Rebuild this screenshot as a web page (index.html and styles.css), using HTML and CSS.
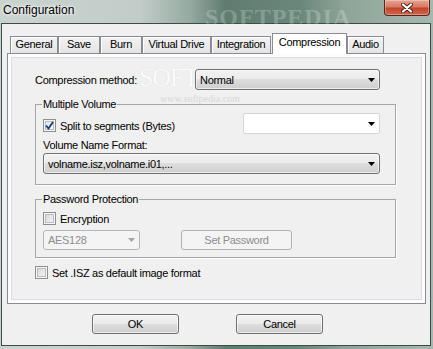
FILE: index.html
```html
<!DOCTYPE html>
<html lang="en">
<head>
    <meta charset="UTF-8">
    <title>Configuration</title>
    <link rel="stylesheet" href="styles.css">
</head>
<body>
    <div class="window">
        <div class="titlebar">
            <span class="title">Configuration</span>
            <span class="glass-mark">SOFTPEDIA</span>
            <div class="close">
                <svg width="12" height="10" viewBox="0 0 12 10">
                    <path d="M2 1.5 L10 8.5 M10 1.5 L2 8.5" stroke="#4a1e15" stroke-width="4" stroke-linecap="round"/>
                    <path d="M2 1.5 L10 8.5 M10 1.5 L2 8.5" stroke="#fff" stroke-width="2.2" stroke-linecap="round"/>
                </svg>
            </div>
        </div>

        <div class="client">
            <div class="tabs">
                <div class="tab tab-general">General</div>
                <div class="tab tab-save">Save</div>
                <div class="tab tab-burn">Burn</div>
                <div class="tab tab-virtual">Virtual Drive</div>
                <div class="tab tab-integration">Integration</div>
                <div class="tab tab-compression active">Compression</div>
                <div class="tab tab-audio">Audio</div>
            </div>

            <div class="panel">
                <!-- watermark over the page -->
                <div class="watermark">SOFTPEDIA<sup>™</sup></div>
                <div class="watermark-url">www.softpedia.com</div>

                <div class="row method-row">
                    <label class="method-label">Compression method:</label>
                    <div class="combo combo-method">
                        <span>Normal</span>
                        <svg class="arrow" width="7" height="4" viewBox="0 0 7 4"><polygon points="0,0 7,0 3.5,4" fill="#000"/></svg>
                    </div>
                </div>

                <fieldset class="group group-volume">
                    <legend>Multiple Volume</legend>
                    <div class="row split-row">
                        <label class="check">
                            <span class="box checked">
                                <svg width="11" height="11" viewBox="0 0 11 11"><path d="M2 5.5 L4.5 8.5 L9 2" stroke="#1d3a8f" stroke-width="1.9" fill="none"/></svg>
                            </span>
                            Split to segments (Bytes)
                        </label>
                        <div class="combo combo-edit">
                            <span></span>
                            <svg class="arrow" width="7" height="4" viewBox="0 0 7 4"><polygon points="0,0 7,0 3.5,4" fill="#000"/></svg>
                        </div>
                    </div>
                    <div class="caption">Volume Name Format:</div>
                    <div class="combo combo-name">
                        <span>volname.isz,volname.i01,...</span>
                        <svg class="arrow" width="7" height="4" viewBox="0 0 7 4"><polygon points="0,0 7,0 3.5,4" fill="#000"/></svg>
                    </div>
                </fieldset>

                <fieldset class="group group-password">
                    <legend>Password Protection</legend>
                    <label class="check enc-row">
                        <span class="box"></span>
                        Encryption
                    </label>
                    <div class="row cipher-row">
                        <div class="combo combo-cipher disabled">
                            <span>AES128</span>
                            <svg class="arrow" width="7" height="4" viewBox="0 0 7 4"><polygon points="0,0 7,0 3.5,4" fill="#a3a3a3"/></svg>
                        </div>
                        <div class="btn btn-password disabled">Set Password</div>
                    </div>
                </fieldset>

                <label class="check default-row">
                    <span class="box"></span>
                    Set .ISZ as default image format
                </label>
            </div>

            <div class="buttons">
                <div class="btn btn-dialog">OK</div>
                <div class="btn btn-dialog">Cancel</div>
            </div>
        </div>
    </div>
</body>
</html>
```

FILE: styles.css
```css
* {
    box-sizing: border-box;
}
body {
    margin: 0;
    font-family: "Liberation Sans", Arial, sans-serif;
    font-size: 11px;
    letter-spacing: -0.3px;
    color: #000;
}
.window {
    width: 433px;
    height: 349px;
    display: flex;
    flex-direction: column;
    overflow: hidden;
    background: linear-gradient(90deg, #c9d3cf 0, #c2ccc8 140px, #95aaa1 190px, #5f7c71 225px, #6a877b 300px, #8ea599 345px, #a5b8b0 433px);
}

/* title bar */
.titlebar {
    height: 23px;
    flex-shrink: 0;
    display: flex;
    align-items: flex-start;
    position: relative;
}
.title {
    font-size: 12px;
    letter-spacing: 0;
    line-height: 15px;
    margin: 3px 0 0 3px;
    text-shadow: 0 0 5px #fff, 0 0 3px #fff;
}
.glass-mark {
    position: absolute;
    left: 205px;
    top: 4px;
    font-family: "Liberation Serif", serif;
    font-weight: bold;
    font-size: 24px;
    letter-spacing: 1px;
    color: rgba(255, 255, 255, 0.22);
}
.close {
    margin-left: auto;
    margin-right: 3px;
    width: 46px;
    height: 16px;
    border: 1px solid #5b2419;
    border-top: none;
    border-radius: 0 0 4px 4px;
    background: linear-gradient(#e7a492 0, #d77c63 45%, #c1432a 55%, #d2684d 100%);
    box-shadow: inset 0 0 0 1px rgba(255, 255, 255, 0.3);
    display: flex;
    align-items: center;
    justify-content: center;
    position: relative;
    z-index: 1;
}

/* client area */
.client {
    flex: 1;
    margin: 0 2px 3px 1px;
    border: 1px solid #3e4b46;
    background: #f0f0f0;
    padding: 9px 4px 0 5px;
    display: flex;
    flex-direction: column;
}
.tabs {
    height: 20px;
    display: flex;
    align-items: flex-end;
    padding-left: 3px;
}
.tab {
    height: 17px;
    line-height: 15px;
    text-align: center;
    border: 1px solid #898c95;
    border-bottom: none;
    background: linear-gradient(#f3f3f3, #e4e4e4);
    box-shadow: inset 1px 1px 0 #fff;
}
.tab-general { width: 48px; }
.tab-save { width: 42px; }
.tab-burn { width: 42px; }
.tab-virtual { width: 69px; }
.tab-integration { width: 60px; }
.tab-compression { width: 75px; margin-left: 1px; }
.tab-audio { width: 37px; }
.tab.active {
    height: 21px;
    line-height: 17px;
    margin-bottom: -1px;
    background: #fff;
    box-shadow: none;
    position: relative;
    z-index: 1;
}

.panel {
    height: 251px;
    border: 1px solid #898c95;
    background: #f0f0f0;
    box-shadow: inset 0 0 0 3px #fcfcfc, inset 0 0 0 4px #dcdcdc;
    padding: 15px 0 0 27px;
    position: relative;
}
.watermark {
    position: absolute;
    left: 131px;
    top: 9px;
    font-family: "Liberation Serif", serif;
    font-size: 26px;
    letter-spacing: -1.2px;
    color: #fbfbfb;
    text-shadow: 0 0 1px #d4d4d4;
}
.watermark sup {
    font-size: 8px;
    vertical-align: 14px;
    margin-left: 2px;
}
.watermark-url {
    position: absolute;
    left: 152px;
    top: 39px;
    font-family: "Liberation Serif", serif;
    font-size: 10px;
    letter-spacing: 0;
    color: #d8d8d8;
}

.row {
    display: flex;
    align-items: center;
}
.method-row {
    height: 21px;
    position: relative;
}
.method-label {
    width: 160px;
}

.combo {
    height: 21px;
    display: flex;
    align-items: center;
    padding: 0 4px 0 4px;
    border: 1px solid #707070;
    border-radius: 3px;
    background: linear-gradient(#f2f2f2 0, #ebebeb 50%, #dddddd 50%, #cfcfcf 100%);
    box-shadow: inset 0 0 0 1px rgba(255, 255, 255, 0.6);
}
.combo .arrow {
    margin-left: auto;
}
.combo-method {
    width: 185px;
}
.combo-edit {
    width: 137px;
    margin-left: auto;
    background: #fff;
    border-color: #d3d6db;
    border-radius: 2px;
    box-shadow: none;
}
.combo-name {
    width: 100%;
    margin-top: 1px;
}
.combo-cipher {
    width: 97px;
    height: 20px;
}
.combo.disabled {
    background: #f4f4f4;
    border-color: #b5b8ba;
    color: #8d8d8d;
    box-shadow: none;
}

.group {
    width: 361px;
    margin: 8px 0 0 0;
    border: 1px solid #a6a6a6;
    box-shadow: 1px 1px 0 #fff;
    padding: 2px 15px 10px 7px;
}
.group legend {
    padding: 0 1px;
    margin-left: -1px;
    line-height: 13px;
}
.split-row {
    height: 21px;
}
.caption {
    line-height: 13px;
    margin-top: 5px;
}

.check {
    display: flex;
    align-items: center;
    gap: 4px;
}
.split-row .check {
    margin-top: 4px;
}
.box {
    width: 13px;
    height: 13px;
    border: 1px solid #8e8f8f;
    background: linear-gradient(135deg, #cfd3d8, #f8f8f8);
    box-shadow: inset 0 0 0 1px #f6f6f6, inset 0 0 0 2px #b9bcc0;
    display: flex;
    align-items: center;
    justify-content: center;
}
.box.checked {
    background: linear-gradient(135deg, #dfe2e6, #fbfbfb);
}
.group-password {
    padding-bottom: 7px;
    padding-top: 5px;
}
.enc-row {
    height: 15px;
}
.cipher-row {
    margin-top: 4px;
}

.btn {
    height: 20px;
    display: flex;
    align-items: center;
    justify-content: center;
    border: 1px solid #707070;
    border-radius: 3px;
    background: linear-gradient(#f2f2f2 0, #ebebeb 50%, #dddddd 50%, #cfcfcf 100%);
    box-shadow: inset 0 0 0 1px rgba(255, 255, 255, 0.6);
}
.btn.disabled {
    background: #f4f4f4;
    border-color: #adb2b5;
    color: #8d8d8d;
    box-shadow: none;
}
.btn-password {
    width: 111px;
    margin-left: 41px;
}
.default-row {
    height: 15px;
    margin-top: 7px;
}

.buttons {
    display: flex;
    gap: 57px;
    padding: 10px 0 0 85px;
}
.btn-dialog {
    width: 87px;
}
```
